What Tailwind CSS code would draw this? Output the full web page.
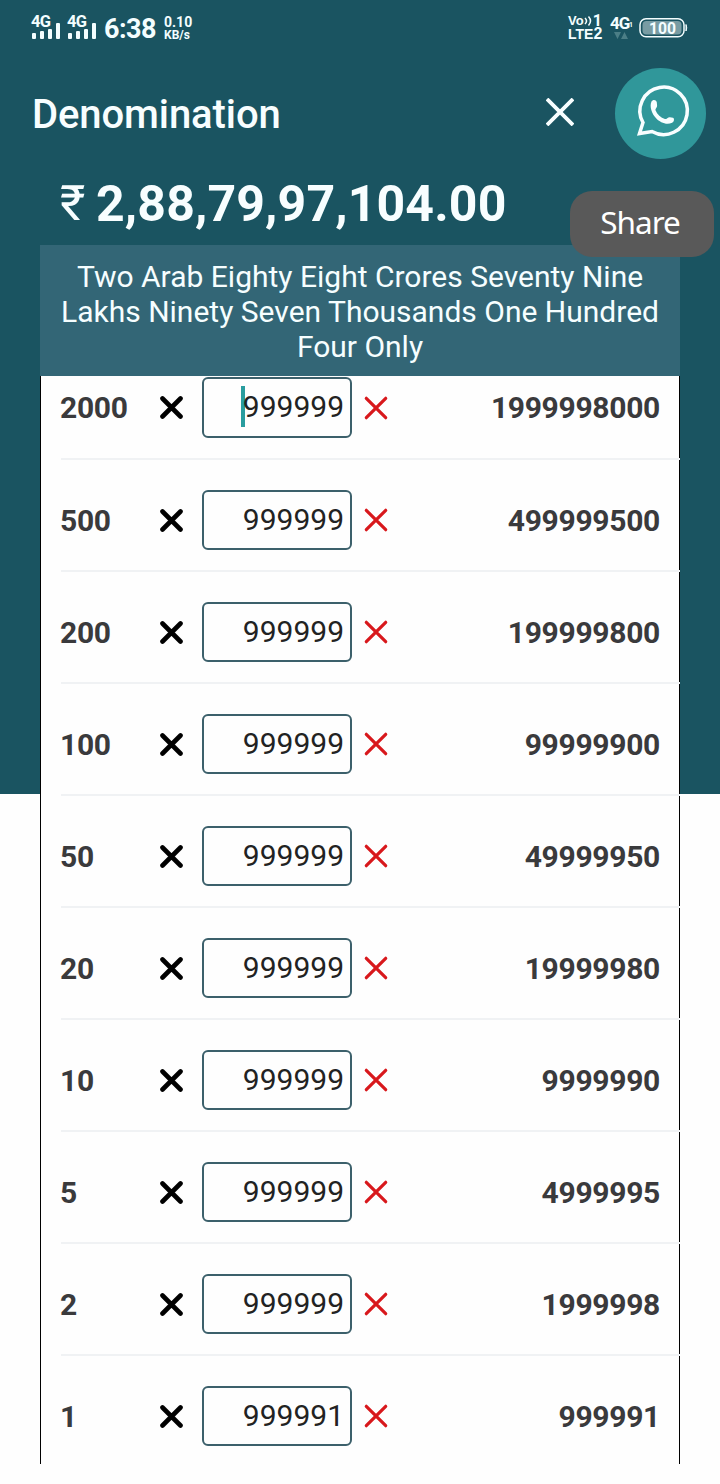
<!DOCTYPE html>
<html lang="en">
<head>
<meta charset="utf-8">
<title>Denomination</title>
<script src="https://cdn.jsdelivr.net/npm/@tailwindcss/browser@4"></script>
</head>
<body class="h-[1484px] w-[720px] overflow-hidden bg-[#fefefe] font-['Roboto',sans-serif]">
<div class="relative h-[1484px] w-[720px] bg-[linear-gradient(#1a5461_794px,#fefefe_794px)]">
  <!-- Status bar -->
  <div class="flex h-[60px] items-start pt-[14px] pl-[31px] pr-[32px] text-[#f4feff]">
    <div class="mr-[7px] w-[29px]">
      <div class="h-[14px] text-[16.5px] leading-[15px] font-bold tracking-[-0.8px]">4G</div>
      <svg class="-mt-[5px] block" width="29" height="16" fill="currentColor"><rect x="1" y="10" width="4" height="6" rx="1"/><rect x="9" y="8" width="4" height="8" rx="1"/><rect x="17" y="6" width="4" height="10" rx="1"/><rect x="25" y="0" width="4" height="16" rx="1"/></svg>
    </div>
    <div class="w-[29px]">
      <div class="h-[14px] text-[16.5px] leading-[15px] font-bold tracking-[-0.8px]">4G</div>
      <svg class="-mt-[5px] block" width="29" height="16" fill="currentColor"><rect x="1" y="10" width="4" height="6" rx="1"/><rect x="9" y="8" width="4" height="8" rx="1"/><rect x="17" y="6" width="4" height="10" rx="1"/><rect x="25" y="0" width="4" height="16" rx="1"/></svg>
    </div>
    <div class="ml-[8px] w-[52px] text-[27px] leading-[30px] font-bold tracking-[-0.5px] whitespace-nowrap">6:38</div>
    <div class="ml-[8px] pt-[2px] font-bold whitespace-nowrap"><div class="text-[14px] leading-[13px]">0.10</div><div class="text-[12px] leading-[12px]">KB/s</div></div>
    <div class="ml-auto flex">
      <div class="w-[37px] whitespace-nowrap font-['Liberation_Sans'] font-bold">
        <div class="flex h-[13px] items-center text-[13px] leading-[13px]"><span>Vo</span><svg width="9" height="12" fill="none" stroke="currentColor" stroke-width="1.500"><path d="M1 3Q4 6 1 9M4.500 1.500Q8.500 6 4.500 10.500"/></svg><span class="font-['Roboto'] text-[16px]">1</span></div>
        <div class="flex text-[14px] leading-[14px]"><span>LTE</span><span class="text-[16px]">2</span></div>
      </div>
      <div class="ml-[5px] w-[22px] whitespace-nowrap">
        <div class="flex h-[18px] text-[17px] leading-[19px] font-bold"><span class="w-[19px] tracking-[-1px]">4G</span><span class="pt-[2px] text-[7px]">1</span></div>
        <svg class="ml-[4px] block" width="14" height="8" fill="#4b7e86"><path d="M0 0h7L3.500 7zM7 7h7L10.500 0z"/></svg>
      </div>
      <svg class="mt-[3px] ml-[6px]" width="50" height="22" fill="none"><rect x="2" y="1.700" width="44" height="18" rx="6" stroke="currentColor" stroke-width="1.500"/><rect x="4.500" y="4" width="39" height="13.500" rx="4" fill="#789ca3"/><path d="M48 7.500Q49.500 11 48 14z" fill="currentColor" stroke="currentColor"/><text x="11" y="16.500" fill="currentColor" font-size="16" font-weight="700" textLength="27" lengthAdjust="spacingAndGlyphs">100</text></svg>
    </div>
  </div>
  <!-- Title bar -->
  <header class="flex h-[108px] items-center pl-[32px] pr-[14px] text-[#f8feff]">
    <h1 class="pt-[2px] text-[40px] leading-[48px] font-medium tracking-[-0.1px] whitespace-nowrap">Denomination</h1>
    <svg class="mr-[41px] ml-auto -mt-[4px]" width="28" height="28" stroke="currentColor" stroke-width="3.800"><path d="M1 1L27 27M27 1L1 27"/></svg>
    <div class="-mt-px flex h-[91px] w-[91px] items-center justify-center rounded-full bg-[#30979a]">
      <svg class="shrink-0" width="92" height="92" viewBox="0 0 92 92" fill="none"><path d="M24.500 65.500L28 54.500A23.700 23.700 0 1 1 37 63.500Z" stroke="currentColor" stroke-width="3.500"/><path d="M36.500 33.500c1.500-2.300 4.500-2 5.300.8l.3 3.500c0 2-1.800 2.600-1.700 4.200 1.800 4.600 5.500 7.600 9.500 9.100 1.700.2 3.200-2.200 5-1.900l3 .5c1.900.7 1.200 4-.8 5.100-5.500 2.600-12-.3-16-4.500-4-4.200-7-11.500-4.600-16.800z" fill="currentColor"/></svg>
    </div>
  </header>
  <div class="flex h-[77px] pt-[5px] pl-[60px] text-[50px] leading-[62px] font-bold whitespace-nowrap text-[#f8feff]"><span class="w-[36px] text-[49px] font-normal">₹</span><span class="tracking-[0.15px]">2,88,79,97,104.00</span></div>
  <div class="absolute top-[191px] left-[570px] flex h-[66px] w-[144px] items-center justify-center rounded-[22px] bg-[#595959] pb-[4px] pr-[4px] font-['Noto_Sans'] text-[31.500px] tracking-[-1px] text-white">Share</div>
  <main class="mx-[40px] h-[1219px] overflow-hidden">
    <div class="h-[131px] bg-[#336676] pt-[14px] text-center text-[30px] leading-[35px] whitespace-nowrap text-[#f6feff]">Two Arab Eighty Eight Crores Seventy Nine<br>Lakhs Ninety Seven Thousands One Hundred<br>Four Only</div>
    <div id="rows" class="h-[1088px] overflow-hidden bg-[linear-gradient(#000,#000),linear-gradient(#000,#000),linear-gradient(#fefefe,#fefefe)] bg-[size:1px_100%,1px_100%,100%_100%] bg-[position:left,right,left] bg-no-repeat"></div>
  </main>
</div>
<script>
const rows = [[2000,999999,'1999998000'],[500,999999,'499999500'],[200,999999,'199999800'],[100,999999,'99999900'],[50,999999,'49999950'],[20,999999,'19999980'],[10,999999,'9999990'],[5,999999,'4999995'],[2,999999,'1999998'],[1,999991,'999991']];
document.getElementById('rows').innerHTML = rows.map(([d, n, total], i) => `
<div class="${i ? 'h-[112px] pt-[30px]' : 'h-[84px] pt-px'} flex flex-col justify-between pl-[20px]">
  <div class="${i ? 'h-[60px]' : 'h-[61px]'} flex items-center pr-[20px]">
    <div class="w-[99px] text-[30px] font-bold tracking-[-0.3px] text-[#3a3a3c]">${d}</div>
    <svg class="mr-[19.500px] ml-[0.500px]" width="23" height="23" stroke="#000" stroke-width="4.600" stroke-linecap="round"><path d="M2.500 2.500L20.500 20.500M20.500 2.500L2.500 20.500"/></svg>
    <div class="${i ? 'pb-[2px]' : 'pb-[3px]'} flex h-full w-[150px] items-center justify-end rounded-[6px] border-2 border-[#3c606b] pr-[6px] text-[30px] text-[#222]">${i ? '' : '<span class="-mr-[2px] h-[41px] w-[4px] bg-[#2a9d9f]"></span>'}<span>${n}</span></div>
    <svg class="ml-[12px]" width="24" height="24" stroke="#d8181c" stroke-width="3.200" stroke-linecap="round"><path d="M2.300 2.300L21.700 21.700M21.700 2.300L2.300 21.700"/></svg>
    <div class="ml-auto text-[30px] font-bold tracking-[-0.3px] text-[#3a3a3c]">${total}</div>
  </div>
  <div class="ml-px h-[2px] bg-[#f0f2f4]"></div>
</div>`).join('');
</script>
</body>
</html>
